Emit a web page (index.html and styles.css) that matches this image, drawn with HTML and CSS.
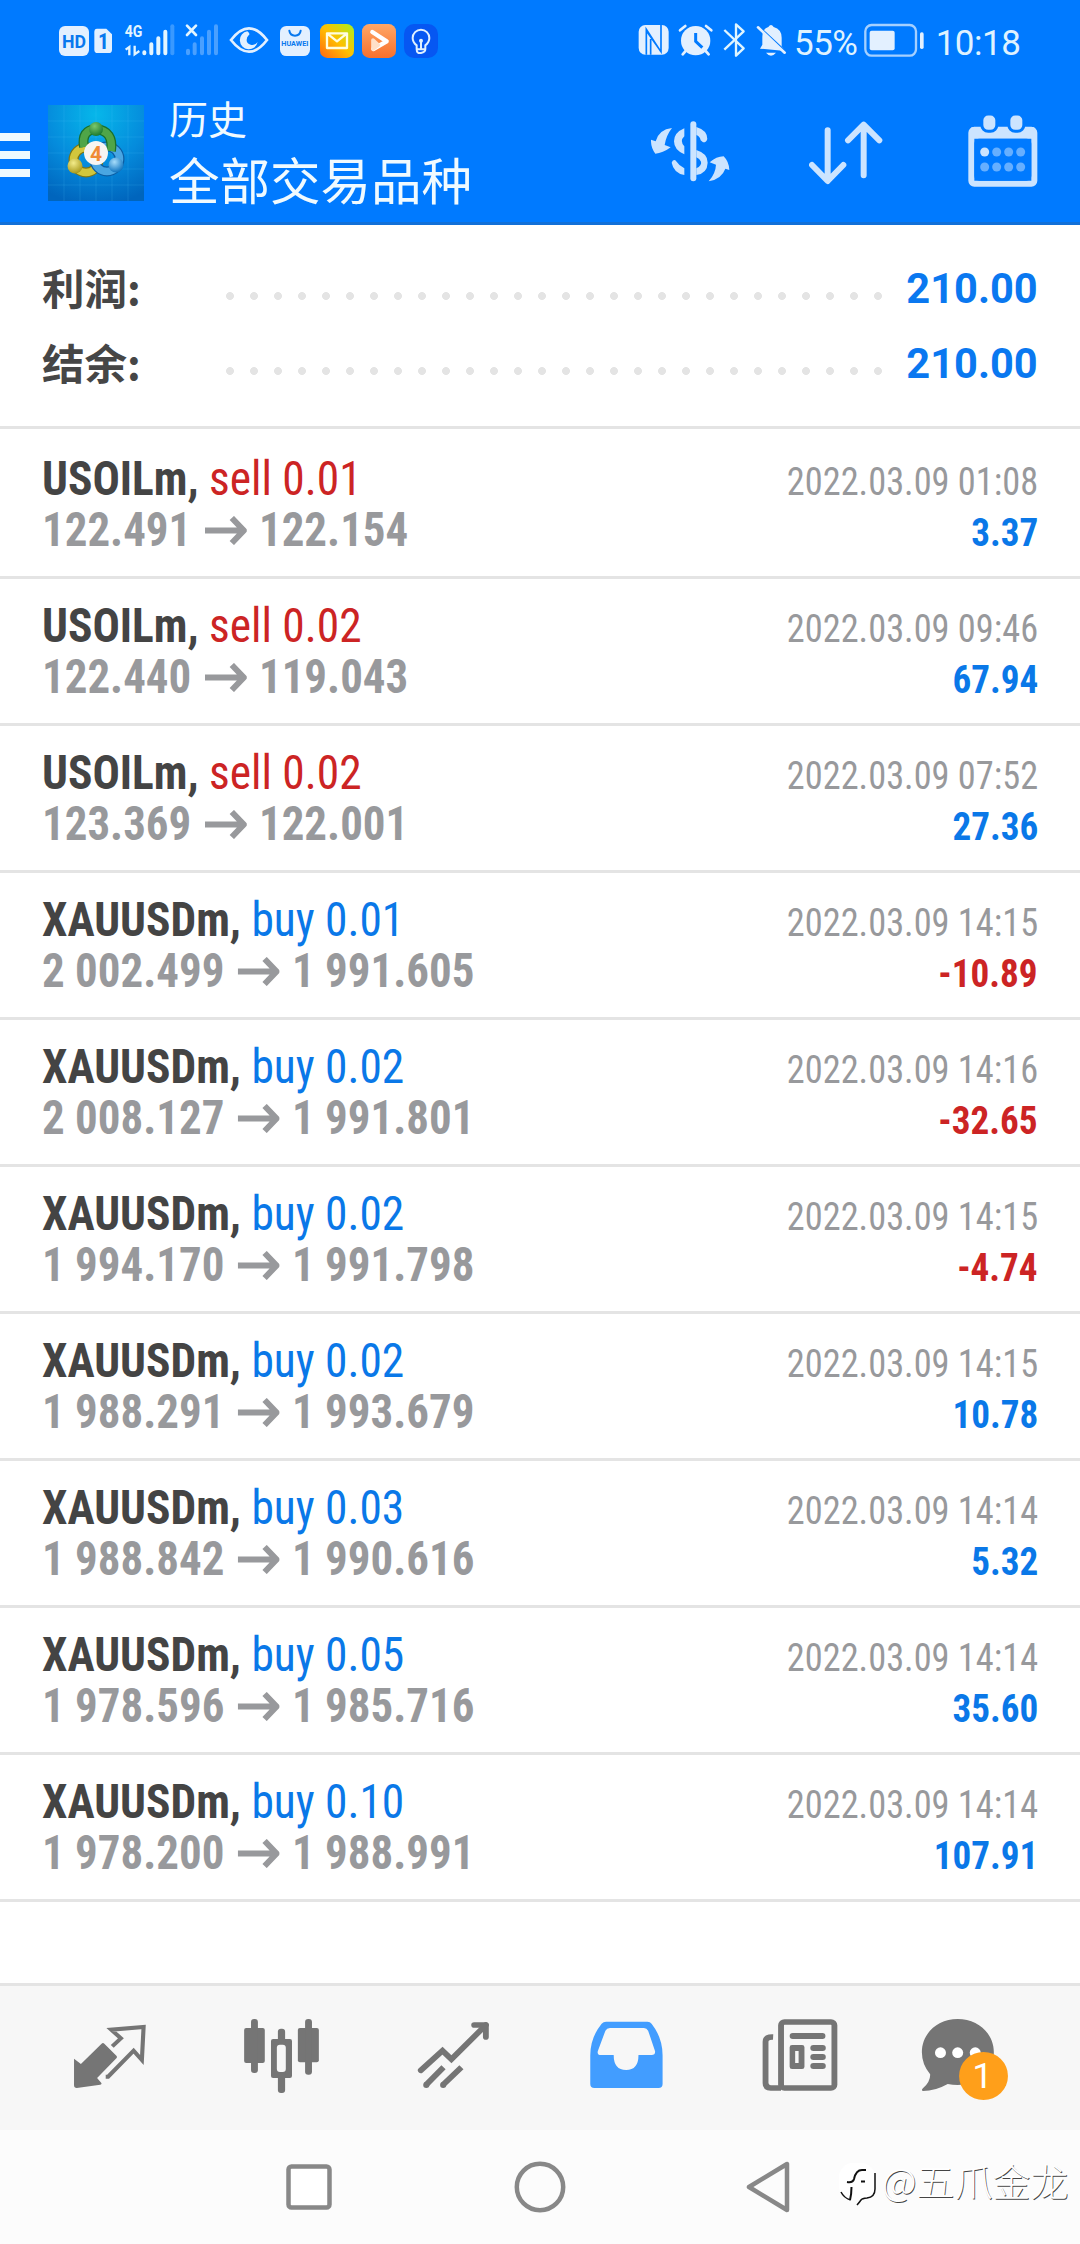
FILE: index.html
```html
<!DOCTYPE html>
<html lang="zh-CN">
<head>
<meta charset="utf-8">
<title>历史</title>
<link rel="stylesheet" href="styles.css">
</head>
<body>
<div class="screen">
  <header class="top">
    <div class="status">
      <div class="status-left">
        <svg width="36.67" height="90" viewBox="45 0 110 270"><rect x="57" y="78" width="90" height="90" rx="18" fill="#e3f0ff"/><text x="66" y="144" class="t-hd" textLength="72" lengthAdjust="spacingAndGlyphs">HD</text></svg>
        <svg width="25" height="90" viewBox="155 0 75 270"><path d="M170 86h28l17 17v46q0 10-10 10h-33q-10 0-10-10V96q0-10 8-10z" fill="#e3f0ff"/><text x="173" y="147" class="t-sim">1</text></svg>
        <svg width="63.33" height="90" viewBox="230 0 190 270"><text x="253" y="112" class="t-4g" textLength="53" lengthAdjust="spacingAndGlyphs">4G</text><g fill="none" stroke="#e3f5ff" stroke-width="7"><path d="M256 149l11-8v25M283 137v26l14-10"/></g><g stroke="#e3f5ff" stroke-width="12" stroke-linecap="round"><path d="M312 157v3M333 133v27M354 115v45M375 95v65"/><path d="M396 79v81" opacity=".25"/></g></svg>
        <svg width="45" height="90" viewBox="420 0 135 270"><path d="M441 77l27 28M468 77l-27 28" stroke="#e3f5ff" stroke-width="8" stroke-linecap="round"/><path d="M444 152v8M464 133v27M486 115v45M507 95v65M528 79v81" stroke="#4aa0ff" stroke-width="12" stroke-linecap="round"/></svg>
        <svg width="49" height="90" viewBox="555 0 147 270"><path d="M573 120q54-70 108 0q-54 70-108 0z" fill="none" stroke="#e3f0ff" stroke-width="8"/><path d="M622 94a27 27 0 1 0 31 32q-8 11-21 8t-12-15q0-8 6-13t-4-12z" fill="#e3f0ff"/></svg>
        <svg width="41" height="90" viewBox="702 0 123 270"><rect x="720" y="78" width="90" height="90" rx="19" fill="#e3f0ff"/><path d="M748 92q2 15 17 15t17-15" fill="none" stroke="#0878ee" stroke-width="6" stroke-linecap="round"/><text x="724" y="138" class="t-hw" textLength="81" lengthAdjust="spacingAndGlyphs">HUAWEI</text></svg>
        <svg width="43" height="90" viewBox="825 0 129 270"><defs><linearGradient id="mail" x1="0" y1="1" x2="1" y2="0"><stop offset="0" stop-color="#ff6512"/><stop offset=".5" stop-color="#ffc000"/><stop offset="1" stop-color="#a8f020"/></linearGradient></defs><rect x="840" y="72" width="102" height="102" rx="22" fill="url(#mail)"/><path d="M861 100h60v44h-60zl30 24 30-24" fill="none" stroke="#fffde0" stroke-width="7" stroke-linejoin="round"/></svg>
        <svg width="42" height="90" viewBox="954 0 126 270"><defs><linearGradient id="play" x1="0" y1="0" x2="0" y2="1"><stop offset="0" stop-color="#ffa766"/><stop offset="1" stop-color="#f7702d"/></linearGradient></defs><rect x="966" y="72" width="102" height="102" rx="22" fill="url(#play)"/><path d="M997 96l43 28-40 23" fill="none" stroke="#fff" stroke-width="13" stroke-linecap="round" stroke-linejoin="round"/><path d="M999 147v-27l16 15z" stroke="#ffe0c8" fill="#ffe0c8" stroke-width="11" stroke-linejoin="round"/></svg>
        <svg width="41.67" height="90" viewBox="1080 0 125 270"><rect x="1092" y="72" width="102" height="102" rx="30" fill="#0657f2"/><g fill="none" stroke="#dff0ff" stroke-width="6"><path d="M1130 148v-12q-12-9-12-22a25 25 0 0 1 50 0q0 13-12 22v12q0 9-13 11t-13-11zM1130 148h26M1143 124v22"/></g><circle cx="1143" cy="122" r="6" fill="#dff0ff"/></svg>
      </div>
      <div class="status-right">
        <svg width="38.33" height="90" viewBox="45 0 115 270"><rect x="56" y="75" width="90" height="89" rx="20" fill="#e3f0ff"/><path d="M79 164V88l43 66M123 75v80L79 92M92 164v-47" fill="none" stroke="#007aff" stroke-width="5"/></svg>
        <svg width="41.67" height="90" viewBox="160 0 125 270"><circle cx="228" cy="122" r="44" fill="#e3f0ff"/><path d="M181 91l16-13M275 91l-16-13M198 153l-9 10M258 153l9 10" stroke="#e3f0ff" stroke-width="8" stroke-linecap="round"/><path d="M228 99v25l20 19" fill="none" stroke="#007aff" stroke-width="9"/></svg>
        <svg width="35" height="90" viewBox="285 0 105 270"><path d="M313 90l58 55-23 22V73l23 21-58 55" fill="none" stroke="#dff5ff" stroke-width="7" stroke-linejoin="round"/></svg>
        <svg width="40" height="90" viewBox="390 0 120 270"><path d="M420 146l7-12v-24q0-24 18-29q8-12 16 0q24 7 24 32v26l10 14zM438 158h30q-15 18-30 0z" fill="#e3f0ff"/><path d="M412 77l92 86" stroke="#007aff" stroke-width="8"/><path d="M414 82l80 76" stroke="#e3f0ff" stroke-width="8" stroke-linecap="round"/></svg>
        <span class="pct">55%</span>
        <svg width="63.33" height="90" viewBox="730 0 190 270"><rect x="737" y="75" width="152" height="92" rx="19" fill="none" stroke="#a5d0ff" stroke-width="7"/><rect x="750" y="92" width="75" height="59" rx="6" fill="#e3f0ff"/><rect x="901" y="97" width="11" height="50" rx="5" fill="#e3f0ff"/></svg>
        <span class="clock">10:18</span>
      </div>
    </div>
    <div class="bar">
      <div class="burger"><i></i><i></i><i></i></div>
      <svg class="logo" width="96" height="96" viewBox="0 0 96 96">
        <defs>
          <radialGradient id="sky" cx=".5" cy=".1" r=".95"><stop offset="0" stop-color="#06b7ea"/><stop offset=".55" stop-color="#058bdc"/><stop offset="1" stop-color="#0065bd"/></radialGradient>
          <radialGradient id="g" cx=".4" cy=".3" r=".7"><stop offset="0" stop-color="#7cc86c"/><stop offset="1" stop-color="#1c7a30"/></radialGradient>
          <radialGradient id="y" cx=".4" cy=".3" r=".7"><stop offset="0" stop-color="#f3ec8a"/><stop offset="1" stop-color="#a99a1c"/></radialGradient>
          <radialGradient id="b" cx=".4" cy=".3" r=".7"><stop offset="0" stop-color="#a6dcfa"/><stop offset="1" stop-color="#0f74c0"/></radialGradient>
        </defs>
        <rect width="96" height="96" fill="url(#sky)"/>
        <path d="M0 16h96M0 32h96M0 48h96M0 64h96M0 80h96M16 0v96M32 0v96M48 0v96M64 0v96M80 0v96" stroke="#5cc8ff" stroke-opacity=".16"/>
        <g fill="none">
          <circle cx="38" cy="55" r="12.500" stroke="#7d7514" stroke-width="10"/><circle cx="38" cy="55" r="12.500" stroke="#d2c63c" stroke-width="7.500"/>
          <circle cx="59" cy="54" r="12.500" stroke="#0c5da3" stroke-width="10"/><circle cx="59" cy="54" r="12.500" stroke="#4aa6e2" stroke-width="7.500"/>
          <path d="M36 42q-3-17 12-18q18 2 15 22" stroke="#19702c" stroke-width="10"/><path d="M36 42q-3-17 12-18q18 2 15 22" stroke="#4fa548" stroke-width="7.500"/>
        </g>
        <circle cx="48" cy="24" r="7" fill="url(#g)"/><circle cx="27" cy="61" r="7.500" fill="url(#y)"/><circle cx="68" cy="60" r="7.500" fill="url(#b)"/>
        <circle cx="48" cy="48" r="12" fill="#f7f5f2"/>
        <text x="42" y="55.5" class="t-four">4</text>
      </svg>
      <div class="titles"><div class="title-small">历史</div><div class="title-big">全部交易品种</div></div>
      <svg width="80" height="70" viewBox="92 80 240 210" class="act-deal" fill="#cce4ff"><path d="M155 113q-39 4-49 40l-14-5q-1 25 13 42q22-1 46-19l-18-7q4-28 22-51zM265 273q39-7 50-38l12 4q-1-25-17-41q-22 0-42 18l19 7q-1 26-22 50z"/><rect x="210" y="93" width="18" height="180" rx="9"/><path d="M192 114v24q-15 14 0 30v24q-31-13-31-39t31-39zM228 110q33 10 33 36q-3 11-13 10l-7-6q-2-12-13-16zM228 179q35 11 34 38q-1 32-34 37v-20q17-9 14-20q-4-9-14-13zM154 217q3-10 11-7q10 15 27 24v20q-32-6-38-37z"/></svg>
      <svg width="74" height="70" viewBox="568 80 222 210" class="act-sort" fill="none" stroke="#cce4ff" stroke-width="18" stroke-linecap="round" stroke-linejoin="round"><path d="M624 120v151M577 224l47 48 47-48M732 255V104M685 150l47-47 47 47"/></svg>
      <svg width="70" height="74" viewBox="1043 73 210 222" class="act-cal"><rect x="1053" y="120" width="189" height="162" rx="9" fill="none" stroke="#cce4ff" stroke-width="18"/><path d="M1053 113h189v34H1053z" fill="#cce4ff"/><g fill="#cce4ff" stroke="#007aff" stroke-width="9"><rect x="1084.500" y="73" width="45" height="52" rx="19"/><rect x="1165.500" y="73" width="45" height="52" rx="19"/></g><rect x="1062" y="147" width="171" height="126" rx="15" fill="#007aff"/><circle cx="1093" cy="187" r="13.500" fill="#cce4ff"/><g fill="#66afff"><circle cx="1129" cy="187" r="13.500"/><circle cx="1165" cy="187" r="13.500"/><circle cx="1201" cy="187" r="13.500"/><circle cx="1093" cy="232" r="13.500"/><circle cx="1129" cy="232" r="13.500"/><circle cx="1165" cy="232" r="13.500"/><circle cx="1201" cy="232" r="13.500"/></g></svg>
    </div>
  </header>

  <section class="summary">
    <div class="sum"><span class="sum-label">利润:</span><span class="dots"></span><span class="sum-value">210.00</span></div>
    <div class="sum"><span class="sum-label">结余:</span><span class="dots"></span><span class="sum-value">210.00</span></div>
  </section>

  <svg width="0" height="0" class="defs"><symbol id="arrow" viewBox="0 0 42 29" preserveAspectRatio="none"><path d="M0 14.500h38M27 2l12 12.500L27 27" fill="none" stroke="#98999c" stroke-width="6"/></symbol></svg>

  <main class="deals">
    <div class="deal"><div class="line"><span class="c sym">USOILm, <b class="sell">sell 0.01</b></span><span class="c date">2022.03.09 01:08</span></div><div class="line"><span class="c price">122.491<svg class="arr"><use href="#arrow"/></svg>122.154</span><span class="c val">3.37</span></div></div>
    <div class="deal"><div class="line"><span class="c sym">USOILm, <b class="sell">sell 0.02</b></span><span class="c date">2022.03.09 09:46</span></div><div class="line"><span class="c price">122.440<svg class="arr"><use href="#arrow"/></svg>119.043</span><span class="c val">67.94</span></div></div>
    <div class="deal"><div class="line"><span class="c sym">USOILm, <b class="sell">sell 0.02</b></span><span class="c date">2022.03.09 07:52</span></div><div class="line"><span class="c price">123.369<svg class="arr"><use href="#arrow"/></svg>122.001</span><span class="c val">27.36</span></div></div>
    <div class="deal"><div class="line"><span class="c sym">XAUUSDm, <b class="buy">buy 0.01</b></span><span class="c date">2022.03.09 14:15</span></div><div class="line"><span class="c price">2 002.499<svg class="arr"><use href="#arrow"/></svg>1 991.605</span><span class="c val loss">-10.89</span></div></div>
    <div class="deal"><div class="line"><span class="c sym">XAUUSDm, <b class="buy">buy 0.02</b></span><span class="c date">2022.03.09 14:16</span></div><div class="line"><span class="c price">2 008.127<svg class="arr"><use href="#arrow"/></svg>1 991.801</span><span class="c val loss">-32.65</span></div></div>
    <div class="deal"><div class="line"><span class="c sym">XAUUSDm, <b class="buy">buy 0.02</b></span><span class="c date">2022.03.09 14:15</span></div><div class="line"><span class="c price">1 994.170<svg class="arr"><use href="#arrow"/></svg>1 991.798</span><span class="c val loss">-4.74</span></div></div>
    <div class="deal"><div class="line"><span class="c sym">XAUUSDm, <b class="buy">buy 0.02</b></span><span class="c date">2022.03.09 14:15</span></div><div class="line"><span class="c price">1 988.291<svg class="arr"><use href="#arrow"/></svg>1 993.679</span><span class="c val">10.78</span></div></div>
    <div class="deal"><div class="line"><span class="c sym">XAUUSDm, <b class="buy">buy 0.03</b></span><span class="c date">2022.03.09 14:14</span></div><div class="line"><span class="c price">1 988.842<svg class="arr"><use href="#arrow"/></svg>1 990.616</span><span class="c val">5.32</span></div></div>
    <div class="deal"><div class="line"><span class="c sym">XAUUSDm, <b class="buy">buy 0.05</b></span><span class="c date">2022.03.09 14:14</span></div><div class="line"><span class="c price">1 978.596<svg class="arr"><use href="#arrow"/></svg>1 985.716</span><span class="c val">35.60</span></div></div>
    <div class="deal"><div class="line"><span class="c sym">XAUUSDm, <b class="buy">buy 0.10</b></span><span class="c date">2022.03.09 14:14</span></div><div class="line"><span class="c price">1 978.200<svg class="arr"><use href="#arrow"/></svg>1 988.991</span><span class="c val">107.91</span></div></div>
  </main>

  <nav class="tabs">
    <svg viewBox="69.700 48 499.500 432" preserveAspectRatio="none"><path d="M215 266l20 16 60-61q4-4 8 0l35 36q4 4 0 8l-56 59 13 16q0 4-4 4l-68 10q-8 0-8-8z" fill="#757575"/><path d="M326 229l25-24-28-26 94-8-5 99-24-28-74 78h-7" fill="none" stroke="#757575" stroke-width="12"/></svg>
    <svg viewBox="569.200 48 499.500 432" preserveAspectRatio="none"><g fill="#757575"><rect x="709" y="174" width="60" height="105" rx="6"/><rect x="729" y="147" width="20" height="162" rx="9"/><rect x="865" y="174" width="61" height="103" rx="6"/><rect x="886" y="147" width="20" height="167" rx="9"/><rect x="787" y="207" width="61" height="117" rx="6"/><rect x="807" y="176" width="21" height="193" rx="9"/></g><rect x="804" y="224" width="26" height="82" rx="9" fill="#f7f7f7"/></svg>
    <svg viewBox="1068.700 48 499.500 432" preserveAspectRatio="none"><g fill="none" stroke="#757575" stroke-width="17"><path d="M1377 165h34v36" stroke-linecap="round" stroke-linejoin="round"/><path d="M1222 301l63-59 26 26 100-103" stroke-linecap="round"/><path d="M1288 292l-51 53M1340 292l-54 53"/></g><g fill="#757575"><circle cx="1238" cy="345" r="9"/><circle cx="1287" cy="345" r="9"/></g></svg>
    <svg viewBox="0 48 499.500 432" preserveAspectRatio="none"><path fill="#429dff" fill-rule="evenodd" d="M192 155h120q8 0 12 6q32 42 32 95v86q0 12-12 12H158q-12 0-12-12v-86q0-53 33-95q5-6 13-6zM203 174q-9 0-13 8l-22 61q-3 12 9 12h37q0 45 36 45t36-45h38q12 0 10-12l-20-61q-4-8-12-8z"/></svg>
    <svg viewBox="499.500 48 499.500 432" preserveAspectRatio="none"><g fill="none" stroke="#757575" stroke-width="17"><rect x="700" y="156" width="155" height="198" rx="10"/><path d="M677 201q-22-1-22 14v124q0 15 15 15h30"/></g><g fill="#757575"><rect x="725" y="189" width="104" height="18" rx="9"/><rect x="785" y="225" width="45" height="18" rx="9"/><rect x="785" y="252" width="45" height="18" rx="9"/><rect x="785" y="279" width="45" height="18" rx="9"/><path fill-rule="evenodd" d="M732 225h29q7 0 7 7v58q0 7-7 7h-29q-7 0-7-7v-58q0-7 7-7zM741 243v36h10v-36z"/></g></svg>
    <svg viewBox="999 48 499.500 432" preserveAspectRatio="none"><path d="M1213 147c58 0 105 42 105 100s-47 98-105 98q-15 0-29-3q-36 21-72 21q-6-2 0-8q22-20 21-42q-24-30-24-66c0-58 46-100 104-100z" fill="#757575"/><g fill="#fff"><circle cx="1163" cy="248" r="16"/><circle cx="1213" cy="248" r="16"/><circle cx="1264" cy="248" r="16"/></g><ellipse cx="1288" cy="318" rx="71" ry="72" fill="#ff9f1a"/><text x="1255" y="354" class="t-badge">1</text></svg>
  </nav>
  <footer class="sysnav">
    <svg class="sys-recent" width="46" height="46" viewBox="0 0 46 46"><rect x="2.500" y="2.500" width="41" height="41" rx="3" fill="#fff"/></svg>
    <svg class="sys-home" width="52" height="52" viewBox="0 0 52 52"><circle cx="26" cy="26" r="23.200"/></svg>
    <svg class="sys-back" width="44" height="52" viewBox="0 0 44 52"><path d="M3 26L41 3v46z"/></svg>
    <div class="mark">
      <svg width="38" height="52" viewBox="0 0 38 52"><rect x="0" y="7" width="36" height="37" rx="14" fill="#fff"/><path d="M8 26q6 1 7-3q2-9 8-9h4M22 25.500h4M12.500 31q0 7-1.500 13" fill="none" stroke="#111" stroke-width="2"/><path d="M2 36q3 6 9.500 8M36 17v16q0 8-8 9q-5 .500-6 2t-4 5" fill="none" stroke="#111" stroke-width="1.500"/></svg>
      <span>@五爪金龙</span>
    </div>
  </footer>
</div>
</body>
</html>
```
FILE: styles.css
```css
* { box-sizing: border-box; }
body { margin: 0; background: #fff; font-family: Roboto, "Noto Sans CJK SC", sans-serif; }
svg { display: block; flex: none; }
.screen { width: 1080px; height: 2244px; position: relative; display: flex; flex-direction: column; overflow: hidden; }
.defs { position: absolute; }

.top { height: 225px; background: #007aff; border-bottom: 3px solid #1270d8; color: #f0faff; }
.status { height: 90px; display: flex; justify-content: space-between; }
.status-left { display: flex; padding-left: 55px; }
.status-right { display: flex; width: 445px; align-items: center; font-size: 35px; color: #dff2ff; }
.pct { flex: none; width: 73.330px; padding-left: 4px; line-height: 82px; margin-top: -2px; letter-spacing: -0.5px; }
.clock { flex: none; padding-left: 9px; line-height: 82px; margin-top: -2px; letter-spacing: -0.5px; }
.t-hd { font: 700 56px Roboto, sans-serif; fill: #0878ee; }
.t-sim { font: 700 64px "Roboto Condensed", Roboto, sans-serif; fill: #0878ee; }
.t-4g { font: 700 50px Roboto, sans-serif; fill: #e3f5ff; }
.t-hw { font: 700 22px Roboto, sans-serif; fill: #0878ee; }
.t-four { font: 700 21px Roboto, sans-serif; fill: #f08a35; }
.t-badge { font: 400 106px Roboto, sans-serif; fill: #fff; }

.bar { height: 132px; display: flex; align-items: flex-start; }
.burger { width: 30px; margin: 43px 18px 0 0; display: flex; flex-direction: column; gap: 10px; }
.burger i { height: 8px; background: #eefaff; }
.logo { margin-top: 15px; }
.titles { width: 480px; margin: 8px 0 0 25px; }
.title-small { font-size: 39px; line-height: 46px; }
.title-big { font-size: 50.500px; line-height: 78px; }
.act-deal { margin: 27px 0 0 2px; }
.act-sort { margin: 27px 0 0 78px; }
.act-cal { margin: 24px 0 0 84.500px; }

.summary { height: 204px; padding: 27px 42px 0; border-bottom: 3px solid #e4e4e4; }
.sum { height: 75px; display: flex; align-items: center; }
.sum-label { width: 176px; margin-top: -6px; font: 700 42.500px/75px "Noto Sans CJK SC", sans-serif; color: #464646; }
.dots { width: 672px; height: 8px; margin-top: 13px; background: radial-gradient(circle at 12px 4px, #e4e4e4 3.600px, transparent 4.300px) 0 0 / 24px 8px; }
.sum-value { margin-left: auto; margin-top: -2px; font-size: 42px; line-height: 75px; font-weight: 700; color: #0a78f0; transform: scaleX(.99); transform-origin: right; }

.deals { height: 1554px; padding-top: 3px; }
.deal { height: 147px; padding: 21px 42px 0 42px; border-bottom: 3px solid #e4e4e4; }
.line { height: 51px; display: flex; justify-content: space-between; align-items: baseline; }
.c { font-family: "Roboto Condensed", Roboto, sans-serif; line-height: 51px; white-space: pre; }
.sym { font-size: 48px; font-weight: 700; color: #444; transform: scaleX(.946); transform-origin: left; }
.sym b { font-weight: 400; }
.sell { color: #cc2424; }
.buy { color: #0a78e8; }
.date { font-size: 39.500px; color: #98999c; transform: scaleX(.92); transform-origin: right; }
.price { font-size: 48px; font-weight: 700; color: #98999c; transform: scaleX(.936); transform-origin: left; }
.arr { display: inline-block; width: 44.800px; height: 29px; margin: 0 13px 0 14.500px; vertical-align: 1px; }
.val { font-size: 39.500px; font-weight: 700; color: #0a78e8; transform: scaleX(.94); transform-origin: right; }
.val.loss { color: #cc2424; }

.tabs { height: 147px; display: flex; padding: 0 24px; background: #f7f7f7; border-top: 3px solid #e4e4e4; }
.tabs svg { width: 172px; height: 144px; }
.sysnav { position: relative; height: 114px; background: #fcfcfc; display: flex; align-items: center; padding: 0 0 0 286px; }
.sysnav > svg { fill: none; stroke: #888; stroke-width: 4.500px; stroke-linejoin: round; }
.sys-home { margin-left: 182px; }
.sys-back { margin-left: 180px; }
.mark { position: absolute; left: 839px; top: 26px; display: flex; align-items: flex-start; gap: 5px; font: 300 38px/48px "Noto Sans CJK SC", sans-serif; color: #fff; text-shadow: 0.700px 0.700px 0 #444; white-space: nowrap; }
```
